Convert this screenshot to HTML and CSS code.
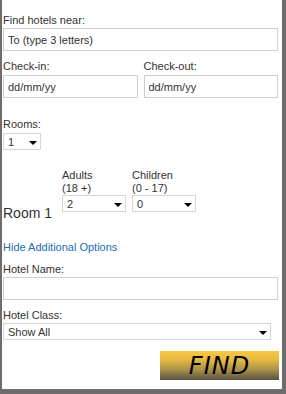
FILE: index.html
```html
<!DOCTYPE html>
<html lang="en">
<head>
<meta charset="UTF-8">
<meta name="viewport" content="width=device-width, initial-scale=1.0">
<title>Find hotels</title>
<link rel="stylesheet" href="styles.css">
</head>
<body>

<div class="panel">
    <label class="field-label" for="near">Find hotels near:</label>
    <input class="text-input" type="text" id="near" value="To (type 3 letters)">

    <div class="date-row">
        <div class="date-col">
            <label class="field-label" for="checkin">Check-in:</label>
            <input class="text-input" type="text" id="checkin" value="dd/mm/yy">
        </div>
        <div class="date-col">
            <label class="field-label" for="checkout">Check-out:</label>
            <input class="text-input" type="text" id="checkout" value="dd/mm/yy">
        </div>
    </div>

    <label class="field-label rooms-label" for="rooms">Rooms:</label>
    <span class="sel sel-rooms">
        <select id="rooms">
            <option>1</option>
            <option>2</option>
            <option>3</option>
        </select>
    </span>

    <div class="room-row">
        <div class="room-name">Room 1</div>
        <div class="guest-col">
            <label class="field-label" for="adults">Adults<br>(18 +)</label>
            <span class="sel sel-guest">
                <select id="adults">
                    <option>1</option>
                    <option selected>2</option>
                    <option>3</option>
                </select>
            </span>
        </div>
        <div class="guest-col">
            <label class="field-label" for="children">Children<br>(0 - 17)</label>
            <span class="sel sel-guest">
                <select id="children">
                    <option>0</option>
                    <option>1</option>
                    <option>2</option>
                </select>
            </span>
        </div>
    </div>

    <a class="options-link" href="#">Hide Additional Options</a>

    <label class="field-label hotel-label" for="hotelName">Hotel Name:</label>
    <input class="text-input" type="text" id="hotelName">

    <label class="field-label hotel-label" for="hotelClass">Hotel Class:</label>
    <span class="sel sel-class">
        <select id="hotelClass">
            <option>Show All</option>
            <option>1 Star</option>
            <option>2 Stars</option>
        </select>
    </span>

    <button class="find-btn" type="button">FIND</button>
</div>

</body>
</html>
```

FILE: styles.css
```css
body {
    margin: 0;
    background-color: #6e6c6c;
    font-family: "Liberation Sans", Arial, sans-serif;
    font-size: 11px;
    color: #333;
}
.panel {
    display: flex;
    flex-direction: column;
    align-items: flex-start;
    box-sizing: border-box;
    height: 389px;
    margin: 0 4px 0 2px;
    padding: 14px 4px 0 1px;
    background-color: #ffffff;
}
.field-label {
    display: block;
    line-height: 13px;
    margin-bottom: 1px;
    color: #333;
}
.text-input {
    box-sizing: border-box;
    width: 100%;
    height: 23px;
    margin: 0;
    padding: 0 4px;
    border: 1px solid #cfcfcf;
    font-family: inherit;
    font-size: 11px;
    color: #333;
    outline: none;
}
.date-row {
    display: flex;
    gap: 6px;
    width: 100%;
    margin-top: 9px;
}
.date-col {
    flex: 1;
}
.date-col .field-label {
    margin-bottom: 2px;
}
.rooms-label {
    margin-top: 20px;
    margin-bottom: 2px;
}
.sel {
    position: relative;
    display: inline-block;
}
.sel::after {
    content: "";
    position: absolute;
    right: 4px;
    top: 8px;
    border-left: 4px solid transparent;
    border-right: 4px solid transparent;
    border-top: 4px solid #000;
    pointer-events: none;
}
.sel select {
    appearance: none;
    -webkit-appearance: none;
    box-sizing: border-box;
    width: 100%;
    height: 17px;
    margin: 0;
    padding: 0 0 0 4px;
    border: 1px solid #d6d6d6;
    border-radius: 0;
    background-color: #fff;
    font-family: inherit;
    font-size: 11px;
    color: #333;
    outline: none;
}
.sel-rooms {
    width: 38px;
}
.sel-guest {
    width: 64px;
}
.sel-class {
    width: 268px;
}
.room-row {
    display: flex;
    align-items: flex-end;
    margin-top: 19px;
}
.room-name {
    width: 59px;
    font-size: 14px;
    line-height: 16px;
}
.guest-col {
    width: 64px;
    margin-right: 6px;
    padding-bottom: 9px;
}
.guest-col .field-label {
    margin-bottom: 0;
}
.options-link {
    margin-top: 20px;
    line-height: 13px;
    color: #1b6eb4;
    text-decoration: none;
}
.hotel-label {
    margin-top: 9px;
}
.hotel-label + .sel {
    margin-top: 0;
}
.find-btn {
    align-self: flex-end;
    width: 119px;
    height: 29px;
    margin: 11px -1px 0 0;
    padding: 0;
    border: none;
    background: linear-gradient(to bottom, #f9c942 0%, #e6b941 30%, #a8914a 65%, #575142 100%);
    font-family: "DejaVu Sans", sans-serif;
    font-style: italic;
    font-size: 24px;
    letter-spacing: 1px;
    color: #000;
    cursor: pointer;
}
```
